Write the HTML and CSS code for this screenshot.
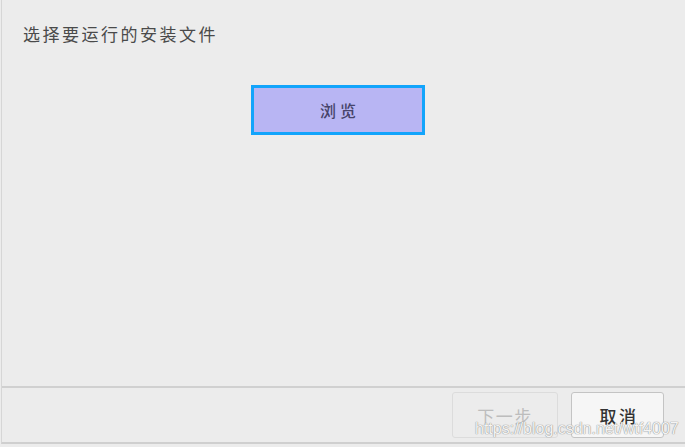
FILE: index.html
```html
<!DOCTYPE html>
<html>
    <head>
        <title>选择安装文件</title>
        <link rel="stylesheet" href="styles.css">
    </head>
    <body>
        <div class="dialog">
            <div class="content">
                <div class="prompt">选择要运行的安装文件</div>
                <div class="browse_row">
                    <div class="browse_btn">浏览</div>
                </div>
            </div>
            <div class="footer">
                <div class="btn disabled">下一步</div>
                <div class="btn cancel">取消</div>
            </div>
            <div class="watermark">https://blog.csdn.net/wtf4007</div>
        </div>
    </body>
</html>
```

FILE: styles.css
```css
body {
    margin: 0;
    background-color: #ececec;
    font-family: "Noto Sans CJK SC", "Noto Sans", sans-serif;
}

.dialog {
    position: relative;
    width: 684px;
    height: 444px;
    border-left: 1px solid #d6d6d6;
    border-bottom: 2px solid #cfcfcf;
    margin-left: 1px;
    display: flex;
    flex-direction: column;
    box-sizing: border-box;
}

.content {
    height: 388px;
    border-bottom: 2px solid #d0d0d0;
    box-sizing: border-box;
}

.prompt {
    font-size: 17px;
    letter-spacing: 2.5px;
    color: #4a4a4a;
    padding: 24px 0 0 21px;
    line-height: 20px;
}

.browse_row {
    display: flex;
    margin: 41px 0 0 249px;
}

.browse_btn {
    width: 164px;
    height: 44px;
    border: 3px solid #12a4fb;
    background-color: #b8b5f3;
    color: #47446a;
    font-size: 16px;
    font-weight: 500;
    letter-spacing: 4px;
    padding-left: 4px;
    display: flex;
    align-items: center;
    justify-content: center;
}

.footer {
    flex: 1;
    display: flex;
    justify-content: flex-end;
    align-items: center;
    gap: 13px;
    padding-right: 21px;
}

.btn {
    height: 46px;
    border: 1px solid #cbcbcb;
    border-radius: 3px;
    display: flex;
    align-items: center;
    justify-content: center;
    font-size: 17px;
    box-sizing: border-box;
}

.disabled {
    width: 106px;
    color: #bdbdbd;
    letter-spacing: 1.5px;
    border-color: #dcdcdc;
    background-color: #ececec;
}

.cancel {
    width: 93px;
    color: #333;
    font-weight: 500;
    letter-spacing: 2.5px;
    padding-left: 3px;
    background-color: #f6f6f6;
    border-color: #c4c4c4;
}

/* overlaid csdn watermark */
.watermark {
    position: absolute;
    left: 473px;
    top: 420px;
    font-family: "Liberation Sans", sans-serif;
    font-size: 16px;
    color: #f4f4f4;
    text-shadow: 0 0 1px #888, 0 0 1px #999;
}
```
